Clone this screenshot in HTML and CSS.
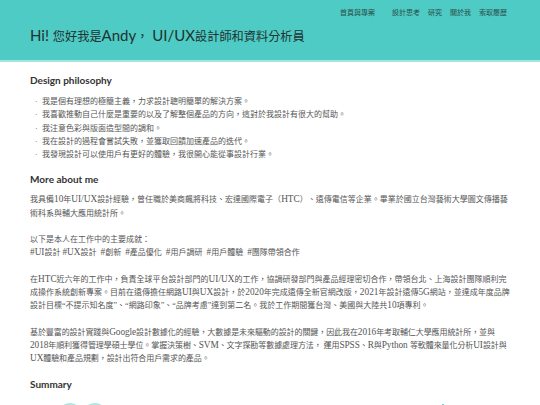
FILE: index.html
```html
<!DOCTYPE html>
<html lang="zh-Hant">
<head>
<meta charset="utf-8">
<title>Andy</title>
<link rel="stylesheet" href="styles.css">
</head>
<body>
<header class="hero">
  <nav class="nav">
    <a class="first">首頁與專案</a><a>設計思考</a><a>研究</a><a>關於我</a><a>索取履歷</a>
  </nav>
  <h1 class="title">Hi! <span class="zh">您好我是</span>Andy<span class="zh">，</span> UI/UX<span class="zh">設計師和資料分析員</span></h1>
</header>
<main class="content">
  <h2 class="head">Design philosophy</h2>
  <ul class="list">
    <li><span class="dot">·</span>我是個有理想的極簡主義，力求設計聰明簡單的解決方案。</li>
    <li><span class="dot">·</span>我喜歡推動自己什麼是重要的以及了解整個產品的方向，這對於我設計有很大的幫助。</li>
    <li><span class="dot">·</span>我注意色彩與版面造型間的調和。</li>
    <li><span class="dot">·</span>我在設計的過程會嘗試失敗，並獲取回饋加速產品的迭代。</li>
    <li><span class="dot">·</span>我發現設計可以使用戶有更好的體驗，我很開心能從事設計行業。</li>
  </ul>
  <h2 class="head">More about me</h2>
  <p class="para">我具備<span class="lt">10</span>年<span class="lt">UI/UX</span>設計經驗，曾任職於美商飆將科技、宏達國際電子（<span class="lt">HTC</span>）、遠傳電信等企業。畢業於國立台灣藝術大學圖文傳播藝術科系與輔大應用統計所。</p>
  <p class="para">以下是本人在工作中的主要成就：<br><span class="lt">#UI</span>設計 <span class="lt">#UX</span>設計 &nbsp;<span class="lt">#</span>創新 &nbsp;<span class="lt">#</span>產品優化 &nbsp;<span class="lt">#</span>用戶調研 &nbsp;<span class="lt">#</span>用戶體驗 &nbsp;<span class="lt">#</span>團隊帶領合作</p>
  <p class="para">在<span class="lt">HTC</span>近六年的工作中，負責全球平台設計部門的<span class="lt">UI/UX</span>的工作，協調研發部門與產品經理密切合作，帶領台北、上海設計團隊順利完成操作系統創新專案。目前在遠傳擔任網路<span class="lt">UI</span>與<span class="lt">UX</span>設計，於<span class="lt">2020</span>年完成遠傳全新官網改版，<span class="lt">2021</span>年設計遠傳<span class="lt">5G</span>網站，並達成年度品牌設計目標“不提示知名度”、“網路印象”、“品牌考慮”達到第二名。我於工作期間獲台灣、美國與大陸共<span class="lt">10</span>項專利。</p>
  <p class="para tight">基於豐富的設計實踐與<span class="lt">Google</span>設計數據化的經驗，大數據是未來驅動的設計的關鍵，因此我在<span class="lt">2016</span>年考取輔仁大學應用統計所，並與<span class="lt">2018</span>年順利獲得管理學碩士學位。掌握決策樹、<span class="lt">SVM</span>、文字探勘等數據處理方法， 運用<span class="lt">SPSS</span>、<span class="lt">R</span>與<span class="lt">Python </span>等軟體來量化分析<span class="lt">UI</span>設計與<span class="lt">UX</span>體驗和產品規劃，設計出符合用戶需求的產品。</p>
  <h2 class="head">Summary</h2>
  <div class="summary">
    <span class="circle"></span><span class="circle"></span><span class="spacer"></span><span class="mark"></span>
  </div>
</main>
</body>
</html>
```
FILE: styles.css
```css
html, body {
  margin: 0;
  padding: 0;
  background: #ffffff;
}
body {
  font-family: "Liberation Serif", "Noto Sans CJK TC", serif;
  color: #555555;
}
.hero {
  background: #4ecbc4;
  height: 60px;
  border-bottom: 2px solid #a6e4e0;
  padding: 0 30px;
  display: flex;
  flex-direction: column;
}
.nav {
  display: flex;
  justify-content: flex-end;
  gap: 8px;
  padding-top: 8px;
  padding-right: 3px;
  font-family: "Noto Sans CJK TC", sans-serif;
  font-size: 7px;
  line-height: 8px;
  color: #2a4d4a;
}
.nav .first {
  margin-right: 9px;
}
.title {
  margin: 9px 0 0;
  font-family: Lato, "Noto Sans CJK TC", sans-serif;
  font-weight: 400;
  font-size: 15px;
  line-height: 20px;
  color: #1f3231;
}
.title .zh {
  font-size: 12.2px;
}
.content {
  padding: 0 30px;
}
.head {
  margin: 0;
  font-family: Lato, sans-serif;
  font-weight: 700;
  font-size: 10px;
  line-height: 13px;
  color: #333333;
}
.content .head:first-child {
  margin-top: 12px;
}
.list {
  list-style: none;
  margin: 8px 0 12px;
  padding: 0 0 0 5px;
  font-size: 8px;
  line-height: 13.3px;
}
.dot {
  display: inline-block;
  width: 7px;
}
.para {
  margin: 7px 0 13px;
  font-size: 8px;
  line-height: 13.3px;
}
.para + .para {
  margin-top: 0;
}
.tight {
  letter-spacing: -0.08px;
}
.lt {
  font-size: 9.3px;
  line-height: 1;
}
.summary {
  display: flex;
  align-items: flex-start;
  padding-left: 28px;
  margin-top: 12px;
}
.circle {
  width: 24px;
  height: 24px;
  border-radius: 50%;
  background: #b0e6e1;
  margin-right: 1px;
}
.spacer {
  flex: 1;
}
.mark {
  width: 2px;
  height: 6px;
  background: #6fd3cb;
  margin-right: 66px;
  margin-top: 1px;
}
```
